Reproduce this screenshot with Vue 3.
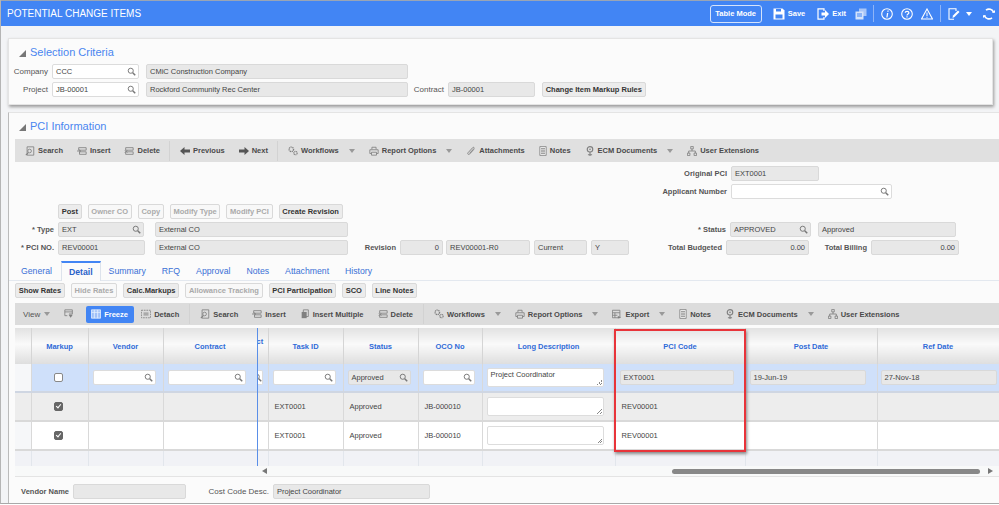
<script setup>
const toolbarOne = [
  { icon: 'find', label: 'Search' },
  { icon: 'insert', label: 'Insert' },
  { icon: 'delete', label: 'Delete', sep: true },
  { icon: 'prev', label: 'Previous' },
  { icon: 'next', label: 'Next', sep: true },
  { icon: 'gears', label: 'Workflows', caret: true },
  { icon: 'print', label: 'Report Options', caret: true },
  { icon: 'clip', label: 'Attachments' },
  { icon: 'note', label: 'Notes' },
  { icon: 'ecm', label: 'ECM Documents', caret: true },
  { icon: 'org', label: 'User Extensions' }
]

const toolbarTwo = [
  { icon: 'find', label: 'Search' },
  { icon: 'insert', label: 'Insert' },
  { icon: 'multi', label: 'Insert Multiple' },
  { icon: 'delete', label: 'Delete', sep: true },
  { icon: 'gears', label: 'Workflows', caret: true },
  { icon: 'print', label: 'Report Options', caret: true },
  { icon: 'export', label: 'Export', caret: true },
  { icon: 'note', label: 'Notes' },
  { icon: 'ecm', label: 'ECM Documents', caret: true },
  { icon: 'org', label: 'User Extensions' }
]

const pciButtons = [
  { label: 'Post' },
  { label: 'Owner CO', off: true },
  { label: 'Copy', off: true },
  { label: 'Modify Type', off: true },
  { label: 'Modify PCI', off: true },
  { label: 'Create Revision' }
]

const tabs = ['General', 'Detail', 'Summary', 'RFQ', 'Approval', 'Notes', 'Attachment', 'History']

const detailButtons = [
  { label: 'Show Rates' },
  { label: 'Hide Rates', off: true },
  { label: 'Calc.Markups' },
  { label: 'Allowance Tracking', off: true },
  { label: 'PCI Participation' },
  { label: 'SCO' },
  { label: 'Line Notes' }
]

const rows = [
  { id: 1, task: 'EXT0001', status: 'Approved', oco: 'JB-000010', pci: 'REV00001' },
  { id: 2, task: 'EXT0001', status: 'Approved', oco: 'JB-000010', pci: 'REV00001' }
]
</script>

<template>
  <svg class="defs" aria-hidden="true">
    <symbol id="i-search" viewBox="0 0 12 12"><circle cx="5" cy="5" r="3.4" fill="none" stroke="currentColor" stroke-width="1.3" /><path d="M7.6 7.6 11 11" stroke="currentColor" stroke-width="2" /></symbol>
    <symbol id="i-find" viewBox="0 0 12 12"><path d="M2.5 1h8v10h-8z" fill="none" stroke="currentColor" /><circle cx="5.5" cy="6" r="2.2" fill="none" stroke="currentColor" /><path d="M4 8 1 11" stroke="currentColor" stroke-width="1.4" /></symbol>
    <symbol id="i-insert" viewBox="0 0 12 12"><path d="M2 2h9v3H2zM3 7h8v3H3z" fill="none" stroke="currentColor" /><path d="M0 6h4M2.5 4.5 4.5 6l-2 1.5" fill="none" stroke="currentColor" /></symbol>
    <symbol id="i-delete" viewBox="0 0 12 12"><path d="M2 2h9v3H2zM2 7h9v3H2z" fill="none" stroke="currentColor" /><path d="m1 5 3 3M4 5 1 8" stroke="currentColor" /></symbol>
    <symbol id="i-prev" viewBox="0 0 10 10"><path d="M0 5 4.5 1v2.5H10v3H4.5V9z" fill="#555" /></symbol>
    <symbol id="i-next" viewBox="0 0 10 10"><path d="M10 5 5.500 1v2.500H0v3h5.500V9z" fill="#555" /></symbol>
    <symbol id="i-gears" viewBox="0 0 12 12"><circle cx="4" cy="4" r="2.7" fill="none" stroke="currentColor" stroke-width="1.6" stroke-dasharray="1.4 .7" /><circle cx="9" cy="8.5" r="2" fill="none" stroke="currentColor" stroke-width="1.4" stroke-dasharray="1.2 .6" /></symbol>
    <symbol id="i-print" viewBox="0 0 12 12"><path d="M3.5 4V1.5h5V4M1 4.500h10v4.500H9M3 9H1V4.500M3 7.500h6v3.500H3z" fill="none" stroke="currentColor" /></symbol>
    <symbol id="i-clip" viewBox="0 0 12 12"><path d="M9.500 4 4.500 9.500c-1.500 1.500-3.200 0-2-1.500L8 2c1-1 2.500 0 1.500 1.200L4.500 8.500" fill="none" stroke="currentColor" stroke-width="1.100" /></symbol>
    <symbol id="i-note" viewBox="0 0 10 12"><path d="M1 .5h8v11H1z" fill="#f0f0f0" stroke="currentColor" /><path d="M2.500 3h5M2.500 5h5M2.500 7h5M2.500 9h5" stroke="currentColor" /></symbol>
    <symbol id="i-ecm" viewBox="0 0 12 12"><circle cx="6" cy="4" r="3.300" fill="none" stroke="currentColor" stroke-width="1.400" /><path d="M6 7.500V12M3.500 10.500h5" stroke="currentColor" stroke-width="1.300" /><circle cx="6" cy="4" r="1" fill="currentColor" /></symbol>
    <symbol id="i-org" viewBox="0 0 12 12"><path d="M4.500.5h3v3h-3zM.5 8.500h3v3h-3zM8.500 8.500h3v3h-3z" fill="none" stroke="currentColor" /><path d="M6 3.500V6M2 8.500V6h8v2.500" fill="none" stroke="currentColor" /></symbol>
    <symbol id="i-multi" viewBox="0 0 12 12"><path d="M4 1h6v8H4z" fill="none" stroke="currentColor" /><path d="M2 3.500h6V11H2z" fill="currentColor" /></symbol>
    <symbol id="i-export" viewBox="0 0 12 12"><path d="M.5 1.500h9v9h-9zM.5 4.500h9M.5 7.500h6M3.500 4.500v6" fill="none" stroke="currentColor" /><path d="m7 8.500 4 1.500-4 1.500z" fill="currentColor" /></symbol>
    <symbol id="i-freeze" viewBox="0 0 12 12"><path d="M.5 1h11v10H.5z" fill="#9fc0f8" /><path d="M.5 1h11v10H.5zM4 1v10M8 1v10M.5 4h11" fill="none" stroke="#e6effe" /></symbol>
    <symbol id="i-detach" viewBox="0 0 12 12"><path d="M.5 1.500h11v9H.5z" fill="none" stroke="currentColor" stroke-dasharray="2 1" /><path d="M3 4h6v4H3z" fill="#aaa" /></symbol>
    <symbol id="i-view" viewBox="0 0 12 12"><path d="M1 1h9v5H6M1 1v7h3M1 3.500h9" fill="none" stroke="currentColor" /><path d="m5.500 7h5L8 10.500z" fill="currentColor" /></symbol>
    <symbol id="i-save" viewBox="0 0 12 12"><path d="M.5.500h9l2 2v9H.5z" fill="#fff" /><path d="M3 1h5v2.500H3zM2.500 6.500h7V10.500h-7z" fill="#4285f4" /></symbol>
    <symbol id="i-exit" viewBox="0 0 12 12"><path d="M7 3V.8H1v10.400h6V9" fill="none" stroke="#fff" stroke-width="1.200" /><path d="M4.500 4.500H8V2l4 4-4 4V7.500H4.500z" fill="#fff" /></symbol>
    <symbol id="i-copy" viewBox="0 0 12 12"><path d="M4 .5h7.500V8H4z" fill="#a9c6f8" /><path d="M.5 3.500H8.500V11.500H.5z" fill="#d5e3fb" /><path d="M2 6h5M2 8h5" stroke="#4285f4" /></symbol>
    <symbol id="i-info" viewBox="0 0 12 12"><circle cx="6" cy="6" r="5.300" fill="none" stroke="#fff" stroke-width="1.100" /><path d="M6.500 2.500h1.300l-.3 1.300H6.200zM6 5h1.300L6.500 9.500H5.300z" fill="#fff" /></symbol>
    <symbol id="i-help" viewBox="0 0 12 12"><circle cx="6" cy="6" r="5.300" fill="none" stroke="#fff" stroke-width="1.100" /><path d="M4.200 4.700C4.300 2.800 7.900 2.800 7.900 4.700 7.900 6 6 6 6 7.500" fill="none" stroke="#fff" stroke-width="1.200" /><path d="M5.400 8.300h1.200v1.200H5.400z" fill="#fff" /></symbol>
    <symbol id="i-warn" viewBox="0 0 12 12"><path d="M6 1 11.500 11H.5z" fill="none" stroke="#fff" stroke-width="1.100" /><path d="M5.500 4.500h1v3.500h-1zM5.500 8.700h1v1h-1z" fill="#fff" /></symbol>
    <symbol id="i-edit" viewBox="0 0 12 12"><path d="M8 3V.8H1v10.400h5" fill="none" stroke="#fff" stroke-width="1.100" /><path d="m4.500 10 .5-2.500L10 2.500l1.500 1.500-5 5z" fill="#fff" /></symbol>
    <symbol id="i-refresh" viewBox="0 0 12 12"><path d="M10.600 4.500A4.800 4.800 0 0 0 3 2.200M1.400 7.500A4.800 4.800 0 0 0 9 9.800" fill="none" stroke="#fff" stroke-width="1.600" /><path d="M9 4.800h3V2zM3 7.200H0V10z" fill="#fff" /></symbol>
  </svg>

  <div class="page">
    <header class="topbar">
      <h1>POTENTIAL CHANGE ITEMS</h1>
      <div class="top-actions">
        <button class="mode-btn">Table Mode</button>
        <span class="top-link link-save"><svg class="top-icon"><use href="#i-save" /></svg>Save</span>
        <span class="top-link link-exit"><svg class="top-icon"><use href="#i-exit" /></svg>Exit</span>
        <svg class="top-icon icon-copy"><use href="#i-copy" /></svg>
        <span class="top-sep"></span>
        <svg class="top-icon"><use href="#i-info" /></svg>
        <svg class="top-icon"><use href="#i-help" /></svg>
        <svg class="top-icon"><use href="#i-warn" /></svg>
        <span class="top-sep"></span>
        <svg class="top-icon"><use href="#i-edit" /></svg>
        <span class="top-caret"></span>
        <svg class="top-icon icon-refresh"><use href="#i-refresh" /></svg>
      </div>
    </header>

    <section class="card card-selection">
      <h2><span class="fold"></span>Selection Criteria</h2>
      <div class="row row-company">
        <label class="lbl lbl-a">Company</label>
        <span class="in w87">CCC<svg class="mag"><use href="#i-search" /></svg></span>
        <span class="in ro w262 ml7">CMiC Construction Company</span>
      </div>
      <div class="row row-project">
        <label class="lbl lbl-a">Project</label>
        <span class="in w87">JB-00001<svg class="mag"><use href="#i-search" /></svg></span>
        <span class="in ro w262 ml7">Rockford Community Rec Center</span>
        <label class="lbl lbl-contract">Contract</label>
        <span class="in ro w87">JB-00001</span>
        <button class="btn ml7">Change Item Markup Rules</button>
      </div>
    </section>

    <section class="card card-pci">
      <h2><span class="fold"></span>PCI Information</h2>
      <div class="toolbar toolbar-one">
        <template v-for="item in toolbarOne" :key="item.label">
          <span class="tool">
            <svg class="tool-icon" :class="'ic-' + item.icon"><use :href="'#i-' + item.icon" /></svg>{{ item.label }}
            <span v-if="item.caret" class="caret"></span>
          </span>
          <span v-if="item.sep" class="tool-sep"></span>
        </template>
      </div>

      <div class="row row-original">
        <label class="lbl lbl-b lbl-far">Original PCI</label>
        <span class="in ro w88">EXT0001</span>
      </div>
      <div class="row row-applicant">
        <label class="lbl lbl-b lbl-far">Applicant Number</label>
        <span class="in w161"><svg class="mag"><use href="#i-search" /></svg></span>
      </div>

      <div class="btn-row pci-buttons">
        <button v-for="b in pciButtons" :key="b.label" class="btn" :class="{ off: b.off }">{{ b.label }}</button>
      </div>

      <div class="row row-type">
        <label class="lbl lbl-b lbl-c">* Type</label>
        <span class="in ro w86">EXT<svg class="mag"><use href="#i-search" /></svg></span>
        <span class="in ro w193 ml11">External CO</span>
        <label class="lbl lbl-b lbl-status">* Status</label>
        <span class="in ro w81">APPROVED<svg class="mag"><use href="#i-search" /></svg></span>
        <span class="in ro w138 ml7">Approved</span>
      </div>
      <div class="row row-pcino">
        <label class="lbl lbl-b lbl-c">* PCI NO.</label>
        <span class="in ro w87">REV00001</span>
        <span class="in ro w193 ml10">External CO</span>
        <label class="lbl lbl-b lbl-revision">Revision</label>
        <span class="in ro w43 num">0</span>
        <span class="in ro w84 ml3">REV00001-R0</span>
        <span class="in ro w53 ml4">Current</span>
        <span class="in ro w38 ml4">Y</span>
        <label class="lbl lbl-b lbl-budget">Total Budgeted</label>
        <span class="in ro w83 num">0.00</span>
        <label class="lbl lbl-b lbl-billing">Total Billing</label>
        <span class="in ro w88 num">0.00</span>
      </div>

      <nav class="tabs">
        <a v-for="t in tabs" :key="t" class="tab" :class="{ active: t === 'Detail' }">{{ t }}</a>
      </nav>

      <div class="btn-row detail-buttons">
        <button v-for="b in detailButtons" :key="b.label" class="btn" :class="{ off: b.off }">{{ b.label }}</button>
      </div>

      <div class="toolbar toolbar-two">
        <span class="tool view">View<span class="caret"></span></span>
        <svg class="tool-icon view-icon"><use href="#i-view" /></svg>
        <button class="freeze"><svg class="tool-icon"><use href="#i-freeze" /></svg>Freeze</button>
        <span class="tool detach"><svg class="tool-icon"><use href="#i-detach" /></svg>Detach</span>
        <span class="tool-sep"></span>
        <template v-for="item in toolbarTwo" :key="item.label">
          <span class="tool">
            <svg class="tool-icon" :class="'ic-' + item.icon"><use :href="'#i-' + item.icon" /></svg>{{ item.label }}
            <span v-if="item.caret" class="caret"></span>
          </span>
          <span v-if="item.sep" class="tool-sep"></span>
        </template>
      </div>

      <div class="grid-wrap">
        <table class="grid">
          <colgroup>
            <col class="c-gutter" /><col class="c-markup" /><col class="c-vendor" /><col class="c-contract" />
            <col class="c-clip" /><col class="c-task" /><col class="c-status" /><col class="c-oco" />
            <col class="c-long" /><col class="c-pci" /><col class="c-post" /><col class="c-ref" />
          </colgroup>
          <thead>
            <tr>
              <th></th><th>Markup</th><th>Vendor</th><th>Contract</th><th class="clip-head">ct</th><th>Task ID</th>
              <th>Status</th><th>OCO No</th><th>Long Description</th><th>PCI Code</th><th>Post Date</th><th>Ref Date</th>
            </tr>
          </thead>
          <tbody>
            <tr class="filter">
              <td class="gutter"></td>
              <td class="center"><span class="check"></span></td>
              <td><span class="in full"><svg class="mag"><use href="#i-search" /></svg></span></td>
              <td class="wide"><span class="in full"><svg class="mag"><use href="#i-search" /></svg></span></td>
              <td class="clip-cell"><span class="in clip-in"><svg class="mag"><use href="#i-search" /></svg></span></td>
              <td><span class="in full"><svg class="mag"><use href="#i-search" /></svg></span></td>
              <td><span class="in ro full">Approved<svg class="mag"><use href="#i-search" /></svg></span></td>
              <td><span class="in full"><svg class="mag"><use href="#i-search" /></svg></span></td>
              <td class="wide"><span class="area">Project Coordinator</span></td>
              <td class="wide"><span class="in ro full">EXT0001</span></td>
              <td class="wide"><span class="in ro full">19-Jun-19</span></td>
              <td class="tight"><span class="in ro full">27-Nov-18</span></td>
            </tr>
            <tr v-for="r in rows" :key="r.id" class="data" :class="{ odd: r.id === 1 }">
              <td class="gutter"></td>
              <td class="center"><span class="check on"></span></td>
              <td></td>
              <td></td>
              <td></td>
              <td>{{ r.task }}</td>
              <td>{{ r.status }}</td>
              <td>{{ r.oco }}</td>
              <td class="wide area-cell"><span class="area"></span></td>
              <td>{{ r.pci }}</td>
              <td></td>
              <td></td>
            </tr>
            <tr class="empty">
              <td></td><td></td><td></td><td></td><td></td><td></td><td></td><td></td><td></td><td></td><td></td><td></td>
            </tr>
          </tbody>
        </table>
        <div class="freeze-line"></div>
        <div class="highlight"></div>
      </div>

      <div class="scrollbar">
        <span class="arrow left"></span>
        <span class="thumb"></span>
        <span class="arrow right"></span>
      </div>

      <div class="row row-footer">
        <label class="lbl lbl-b lbl-vendor">Vendor Name</label>
        <span class="in ro w113"></span>
        <label class="lbl lbl-b lbl-cost">Cost Code Desc.</label>
        <span class="in ro w157">Project Coordinator</span>
      </div>
    </section>
  </div>
</template>

<style>
html,
body {
  margin: 0;
  overflow: hidden;
}
</style>

<style scoped>
.defs {
  position: absolute;
  width: 0;
  height: 0;
}

.page {
  width: 999px;
  height: 504px;
  box-sizing: border-box;
  overflow: hidden;
  background: #f3f4f6;
  border-left: 1px solid #b5b5b5;
  border-bottom: 1px solid #a9a9a9;
  font-family: "Liberation Sans", Arial, sans-serif;
  font-size: 7.5px;
  color: #444;
}

.topbar {
  height: 26px;
  box-sizing: border-box;
  border-top: 1px solid #9aa5b5;
  background: #4285f4;
  display: flex;
  align-items: center;
  justify-content: space-between;
  padding: 0 4px 0 6px;
  color: #fff;
}

.topbar h1 {
  margin: 0;
  font-size: 10px;
  font-weight: normal;
}

.top-actions {
  display: flex;
  align-items: center;
  gap: 8px;
  font-weight: bold;
}

.mode-btn {
  width: 52px;
  height: 18px;
  padding: 0;
  margin-right: 3px;
  border: 1px solid #d5e3fb;
  border-radius: 3px;
  background: #4285f4;
  color: #fff;
  font: bold 7.5px "Liberation Sans", Arial, sans-serif;
}

.top-link {
  display: flex;
  align-items: center;
  gap: 3px;
}

.link-exit {
  margin-left: 4px;
}

.icon-copy {
  margin-left: 1px;
  margin-right: -1px;
}

.top-icon {
  width: 12px;
  height: 12px;
  flex: none;
}

.top-sep {
  width: 1px;
  height: 17px;
  background: #8fb4f7;
  margin: 0 -1px;
}

.top-caret {
  width: 0;
  height: 0;
  margin: 0 3px 0 -2px;
  border-left: 3px solid transparent;
  border-right: 3px solid transparent;
  border-top: 4px solid #fff;
}

.card {
  background: #fbfbfb;
  box-sizing: border-box;
  margin-left: 7px;
  font-size: 8px;
}

.card-selection {
  width: 985px;
  height: 67px;
  margin-top: 12px;
  border: 1px solid #e4e4e4;
  box-shadow: 1px 2px 3px #9a9a9a;
  margin-bottom: 7px;
}

.card-pci {
  height: 391px;
  border-left: 1px solid #bbb;
  border-top: 1px solid #e4e4e4;
}

.card h2 {
  margin: 0;
  height: 24px;
  box-sizing: border-box;
  padding-top: 2px;
  display: flex;
  align-items: center;
  font-size: 11px;
  font-weight: normal;
  color: #4a86f0;
}

.card-pci h2 {
  margin-bottom: 2px;
}

.fold {
  width: 0;
  height: 0;
  margin: 2px 4px 0 10px;
  border-left: 7px solid transparent;
  border-bottom: 7px solid #777;
}

.row {
  display: flex;
  align-items: center;
  height: 15px;
}

.row-company {
  margin-top: 1px;
}

.row-project {
  margin-top: 3px;
}

.lbl {
  text-align: right;
  margin-right: 4px;
  flex: none;
  color: #555;
  white-space: nowrap;
}

.lbl-b {
  font-size: 7.5px;
  font-weight: bold;
}

.lbl-a {
  width: 39px;
}

.lbl-contract {
  width: 36px;
}

.lbl-far {
  width: 718px;
}

.lbl-c {
  width: 45px;
}

.lbl-status {
  width: 378px;
}

.lbl-revision {
  width: 48px;
}

.lbl-budget {
  width: 93px;
}

.lbl-billing {
  width: 58px;
}

.lbl-vendor {
  width: 60px;
}

.lbl-cost {
  width: 83px;
}

.in {
  position: relative;
  display: block;
  box-sizing: border-box;
  height: 15px;
  line-height: 13px;
  padding: 0 3px;
  flex: none;
  border: 1px solid #dcdcdc;
  border-radius: 2px;
  background: #fff;
  font-size: 7.5px;
  color: #444;
  white-space: nowrap;
}

.ro {
  background: #e8e8e8;
  border-color: #d9d9d9;
}

.num {
  text-align: right;
}

.full {
  width: 100%;
}

.w43 { width: 43px; }
.w38 { width: 38px; }
.w53 { width: 53px; }
.w81 { width: 81px; }
.w83 { width: 83px; }
.w84 { width: 84px; }
.w86 { width: 86px; }
.w87 { width: 87px; }
.w88 { width: 88px; }
.w113 { width: 113px; }
.w138 { width: 138px; }
.w157 { width: 157px; }
.w161 { width: 161px; }
.w193 { width: 193px; }
.w262 { width: 262px; }
.ml3 { margin-left: 3px; }
.ml4 { margin-left: 4px; }
.ml7 { margin-left: 7px; }
.ml10 { margin-left: 10px; }
.ml11 { margin-left: 11px; }

.mag {
  position: absolute;
  right: 2px;
  top: 2px;
  width: 9px;
  height: 9px;
  color: #777;
}

.btn {
  height: 15px;
  padding: 0 2.7px;
  flex: none;
  box-sizing: border-box;
  border: 1px solid #d9d9d9;
  border-radius: 2px;
  background: #ececec;
  color: #333;
  font: bold 7.5px "Liberation Sans", Arial, sans-serif;
  white-space: nowrap;
}

.btn.off {
  background: #f8f8f8;
  color: #aaa;
}

.btn-row {
  display: flex;
  height: 15px;
  gap: 6px;
}

.pci-buttons {
  margin: 5px 0 3px 49px;
}

.detail-buttons {
  margin: 2px 0 0 6px;
}

.toolbar {
  display: flex;
  align-items: center;
  background: #e0e0e0;
  margin-left: 6px;
  font-weight: bold;
  font-size: 7.5px;
  color: #4a4a4a;
  white-space: nowrap;
}

.toolbar-one {
  height: 23px;
  padding-left: 10px;
  gap: 14px;
}

.toolbar-one .tool-sep {
  margin: 0 -4.5px;
}

.toolbar-two {
  height: 22px;
  margin-top: 5px;
  padding-left: 8px;
  gap: 14px;
  background: #dcdcdc;
}

.tool {
  display: flex;
  align-items: center;
  gap: 3px;
}

.tool-icon {
  width: 10px;
  height: 10px;
  color: #808080;
  flex: none;
}

.ic-note {
  width: 8px;
}

.tool-sep {
  width: 1px;
  height: 20px;
  margin: 0 -4px;
  background: #d2d2d2;
}

.caret {
  width: 0;
  height: 0;
  margin-left: 7px;
  border-left: 3px solid transparent;
  border-right: 3px solid transparent;
  border-top: 4px solid #999;
}

.view {
  font-weight: normal;
  font-size: 8px;
  color: #555;
}

.view .caret {
  margin-left: 1px;
}

.freeze {
  display: flex;
  align-items: center;
  gap: 3px;
  height: 17px;
  width: 48px;
  margin-left: -2px;
  padding: 0 0 0 5px;
  border: 0;
  border-radius: 2px;
  background: #4285f4;
  color: #fff;
  font: bold 7.5px "Liberation Sans", Arial, sans-serif;
}

.detach {
  margin-left: -7px;
}

.row-original {
  margin-top: 4px;
}

.row-applicant {
  margin-top: 3px;
}

.row-pcino {
  margin-top: 3px;
}

.tabs {
  display: flex;
  align-items: flex-end;
  height: 20px;
  margin-top: 5px;
  padding-left: 12px;
  gap: 16px;
  border-bottom: 1px solid #e3e8ef;
  font-size: 8.7px;
  color: #3a70d6;
}

.tab {
  height: 17px;
  line-height: 15px;
  margin-bottom: -1px;
}

.tab.active {
  height: 20px;
  line-height: 18px;
  padding: 0 7px;
  margin: 0 -8px -1px -7px;
  box-sizing: border-box;
  background: #fbfbfb;
  border: 1px solid #dde3ec;
  border-top: 2px solid #4285f4;
  border-bottom: 0;
  font-weight: bold;
  color: #2a62c9;
}

.grid-wrap {
  position: relative;
  margin: 3px 0 0 6px;
  overflow: hidden;
}

.grid {
  width: 984px;
  table-layout: fixed;
  border-collapse: collapse;
  font-size: 7.5px;
}

.c-gutter { width: 16px; }
.c-markup { width: 57px; }
.c-vendor { width: 75px; }
.c-contract { width: 94px; }
.c-clip { width: 11px; }
.c-task { width: 75px; }
.c-status { width: 75px; }
.c-oco { width: 64px; }
.c-long { width: 133px; }
.c-pci { width: 130px; }
.c-post { width: 132px; }
.c-ref { width: 122px; }

.grid th {
  height: 36px;
  padding: 0;
  border-right: 1px solid #d5d5d5;
  background: linear-gradient(#e2e2e2, #fafafa 45%, #dedede);
  color: #2f6bd8;
  font-weight: bold;
  overflow: hidden;
}

.clip-head {
  text-align: left;
  vertical-align: top;
  line-height: 28px;
  text-indent: -1px;
}

.grid td {
  padding: 0 4px;
  border-right: 1px solid #d9d9d9;
  border-bottom: 2px solid #d9d9d9;
  white-space: nowrap;
  overflow: hidden;
}

.grid .gutter {
  background: #f6f7f9;
}

.grid .center {
  padding-right: 8px;
  text-align: center;
}

.filter td {
  height: 27px;
  background: #cfe0fa;
  border-bottom-color: #cfd6e2;
}

.grid .filter td {
  padding-right: 7px;
}

.grid .filter .wide,
.grid .data .wide {
  padding-right: 11px;
}

.grid .filter .tight {
  padding-right: 2px;
  padding-left: 3px;
}

.grid .filter .clip-cell {
  padding: 0;
}

.clip-in {
  width: 5px;
  padding: 0;
  overflow: hidden;
  border-left: 0;
  border-radius: 0 2px 2px 0;
}

.clip-in .mag {
  right: auto;
  left: -5px;
}

.data td {
  height: 27px;
  background: #fff;
  padding-left: 6px;
}

.grid .data .area-cell {
  padding-left: 4px;
}

.data.odd td {
  background: #ededed;
}

.empty td {
  height: 15px;
  padding: 0;
  background: #f1f2f6;
  border-right-color: #e2e6ec;
  border-bottom: 0;
}

.check {
  display: inline-block;
  vertical-align: middle;
  box-sizing: border-box;
  width: 9px;
  height: 9px;
  border: 1px solid #888;
  border-radius: 2px;
  background: #fff;
}

.check.on {
  position: relative;
  border-color: #666;
  background: #666;
}

.check.on::after {
  content: "";
  position: absolute;
  left: 2px;
  top: 0;
  width: 2px;
  height: 4px;
  border-right: 1px solid #fff;
  border-bottom: 1px solid #fff;
  transform: rotate(40deg);
}

.area {
  position: relative;
  display: block;
  box-sizing: border-box;
  width: 100%;
  height: 19px;
  padding: 1px 3px;
  border: 1px solid #ddd;
  border-radius: 2px;
  background: #fff;
  font-size: 7.5px;
}

.area::after {
  content: "";
  position: absolute;
  right: 1px;
  bottom: 1px;
  width: 5px;
  height: 5px;
  background: linear-gradient(135deg, transparent 50%, #888 50%, #888 60%, transparent 60%, transparent 75%, #888 75%, #888 85%, transparent 85%);
}

.freeze-line {
  position: absolute;
  left: 242px;
  top: 0;
  bottom: 0;
  width: 1px;
  background: #5a8fe8;
}

.highlight {
  position: absolute;
  left: 599px;
  top: 1px;
  width: 132px;
  height: 123px;
  box-sizing: border-box;
  border: 2px solid #e8343a;
  box-shadow: 1px 2px 3px #888;
}

.scrollbar {
  display: flex;
  align-items: center;
  height: 10px;
  margin-left: 6px;
  background: #f8f9f9;
  border-bottom: 1px solid #e4e4e4;
}

.arrow {
  width: 0;
  height: 0;
  border-top: 3px solid transparent;
  border-bottom: 3px solid transparent;
}

.arrow.left {
  margin-left: 247px;
  border-right: 5px solid #777;
}

.arrow.right {
  margin-left: 8px;
  border-left: 5px solid #777;
}

.thumb {
  width: 308px;
  height: 5px;
  margin-left: 405px;
  border-radius: 3px;
  background: #888;
}

.row-footer {
  margin-top: 7px;
}

.row-footer .lbl-cost {
  font-weight: normal;
  font-size: 8px;
}
</style>
